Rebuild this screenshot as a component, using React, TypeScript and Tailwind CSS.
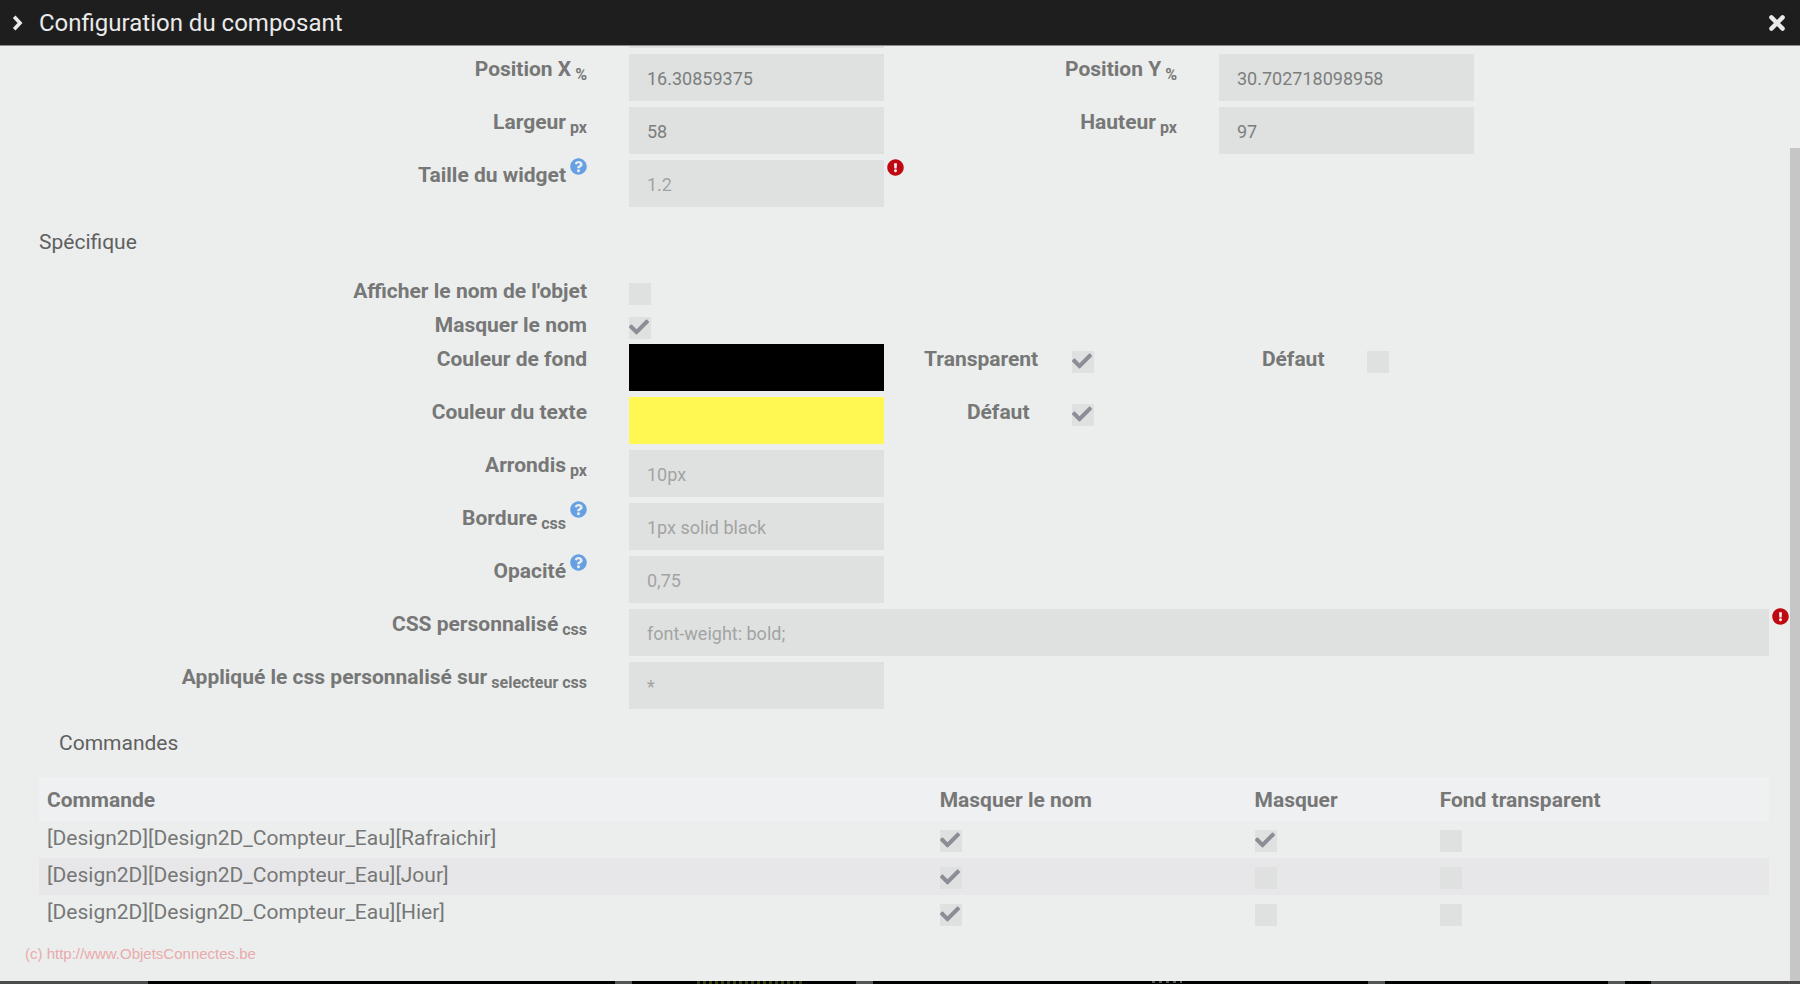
import type { ReactNode } from 'react';
import { FaCheck, FaExclamationCircle, FaQuestionCircle } from 'react-icons/fa';

const commands = [
    { name: '[Design2D][Design2D_Compteur_Eau][Rafraichir]', hideName: true, hide: true, transparent: false },
    { name: '[Design2D][Design2D_Compteur_Eau][Jour]', hideName: true, hide: false, transparent: false },
    { name: '[Design2D][Design2D_Compteur_Eau][Hier]', hideName: true, hide: false, transparent: false },
];

function Row({ children, tall = true }: { children: ReactNode; tall?: boolean }) {
    return <div className={tall ? 'grid grid-cols-12 h-[53px]' : 'grid grid-cols-12 h-[34px]'}>{children}</div>;
}

interface LabelProps {
    id: string;
    text: string;
    unit?: string;
    help?: boolean;
    className?: string;
}

function Label({ id, text, unit, help, className = 'col-span-4' }: LabelProps) {
    return (
        <div className={`${className} pl-5 pr-[22px] text-right font-bold leading-[30px] whitespace-nowrap`}>
            <label htmlFor={id}>
                {text}
                {unit && <sub className="text-base leading-none"> {unit}</sub>}
            </label>
            {help && <FaQuestionCircle className="inline ml-1 -mt-0.5 align-top text-[17px] text-[#66a0e4]" />}
        </div>
    );
}

interface FieldProps {
    id: string;
    value?: string;
    placeholder?: string;
    warning?: boolean;
    className?: string;
}

function Field({ id, value, placeholder, warning, className = 'col-span-2' }: FieldProps) {
    return (
        <div className={`${className} relative px-5`}>
            <input
                id={id}
                type="text"
                defaultValue={value}
                placeholder={placeholder}
                className="block w-full h-[47px] pt-px px-[18px] bg-[#dfe1e0] text-lg text-[#7c7e7d] placeholder:text-[#a2a4a3] outline-none"
            />
            {warning && <FaExclamationCircle className="absolute right-0 -top-px text-[17px] text-[#bf0811]" />}
        </div>
    );
}

function ColorField({ id, value }: { id: string; value: string }) {
    return (
        <div className="col-span-2 px-5">
            <input
                id={id}
                type="color"
                defaultValue={value}
                className="block w-full h-[47px] appearance-none [&::-webkit-color-swatch-wrapper]:p-0 [&::-webkit-color-swatch]:border-0"
            />
        </div>
    );
}

function Checkbox({ id, label, checked }: { id: string; label?: string; checked?: boolean }) {
    return (
        <span className="relative block w-[22px] h-[22px]">
            <input
                id={id}
                type="checkbox"
                aria-label={label}
                defaultChecked={checked}
                className="peer block w-full h-full appearance-none bg-[#dfe1e0]"
            />
            <FaCheck className="absolute left-0 top-0 hidden text-xl text-[#8c8d96] pointer-events-none peer-checked:block" />
        </span>
    );
}

function CheckboxCell({ id, checked }: { id: string; checked?: boolean }) {
    return (
        <div className="col-span-1 px-5 pt-[7px]">
            <Checkbox id={id} checked={checked} />
        </div>
    );
}

export default function App() {
    return (
        <div className="flex flex-col h-screen bg-black font-['Roboto',sans-serif] text-[21px] text-[#767776]">
            <header className="flex items-center shrink-0 h-[46px] pl-3 pr-[15px] border-b border-[#8c8d8c] bg-[#1e1e1e] text-[#eaeaea]">
                <svg className="w-3 h-4" viewBox="0 0 12 16" fill="none" stroke="currentColor" strokeWidth="3.6">
                    <path d="M2.2 1.8 8 8l-5.8 6.2" />
                </svg>
                <h1 className="ml-[15px] text-2xl">Configuration du composant</h1>
                <button type="button" aria-label="Fermer" className="ml-auto">
                    <svg
                        className="w-4 h-4"
                        viewBox="0 0 16 16"
                        fill="none"
                        stroke="currentColor"
                        strokeWidth="4.4"
                        strokeLinecap="round"
                    >
                        <path d="m2.4 2.4 11.2 11.2M13.6 2.4 2.4 13.6" />
                    </svg>
                </button>
            </header>

            <main className="relative flex-1 min-h-0 overflow-hidden bg-[#ebeeed]">
                <form className="pl-[19px] pr-[11px]">
                    {/* bottom edge of the field scrolled under the header */}
                    <div className="grid grid-cols-12 h-2">
                        <div className="col-span-2 col-start-5 mx-5 h-0.5 bg-[#dfe1e0]" />
                    </div>
                    <Row>
                        <Label id="posX" text="Position X" unit="%" />
                        <Field id="posX" value="16.30859375" />
                        <Label id="posY" text="Position Y" unit="%" className="col-span-2" />
                        <Field id="posY" value="30.702718098958" />
                    </Row>
                    <Row>
                        <Label id="width" text="Largeur" unit="px" />
                        <Field id="width" value="58" />
                        <Label id="height" text="Hauteur" unit="px" className="col-span-2" />
                        <Field id="height" value="97" />
                    </Row>
                    <Row>
                        <Label id="size" text="Taille du widget" help />
                        <Field id="size" placeholder="1.2" warning />
                    </Row>

                    <h2 className="px-5 pt-[15px] pb-5 leading-7 text-[#5f605f]">Spécifique</h2>

                    <Row tall={false}>
                        <Label id="showObject" text="Afficher le nom de l'objet" />
                        <CheckboxCell id="showObject" />
                    </Row>
                    <Row tall={false}>
                        <Label id="hideName" text="Masquer le nom" />
                        <CheckboxCell id="hideName" checked />
                    </Row>
                    <Row>
                        <Label id="background" text="Couleur de fond" />
                        <ColorField id="background" value="#000000" />
                        <Label id="bgTransparent" text="Transparent" className="col-span-1" />
                        <CheckboxCell id="bgTransparent" checked />
                        <Label id="bgDefault" text="Défaut" className="col-span-1" />
                        <CheckboxCell id="bgDefault" />
                    </Row>
                    <Row>
                        <Label id="color" text="Couleur du texte" />
                        <ColorField id="color" value="#fff853" />
                        <Label id="colorDefault" text="Défaut" className="col-span-1" />
                        <CheckboxCell id="colorDefault" checked />
                    </Row>
                    <Row>
                        <Label id="radius" text="Arrondis" unit="px" />
                        <Field id="radius" placeholder="10px" />
                    </Row>
                    <Row>
                        <Label id="border" text="Bordure" unit="css" help />
                        <Field id="border" placeholder="1px solid black" />
                    </Row>
                    <Row>
                        <Label id="opacity" text="Opacité" help />
                        <Field id="opacity" placeholder="0,75" />
                    </Row>
                    <Row>
                        <Label id="css" text="CSS personnalisé" unit="css" />
                        <Field id="css" placeholder="font-weight: bold;" warning className="col-span-8" />
                    </Row>
                    <Row>
                        <Label id="selector" text="Appliqué le css personnalisé sur" unit="selecteur css" />
                        <Field id="selector" placeholder="*" />
                    </Row>

                    <h2 className="px-10 pt-3.5 pb-5 leading-7 text-[#5f605f]">Commandes</h2>

                    <div className="px-5">
                        <table className="w-full table-fixed text-left leading-7">
                            <colgroup>
                                <col className="w-[51.6%]" />
                                <col className="w-[18.2%]" />
                                <col className="w-[10.7%]" />
                                <col />
                            </colgroup>
                            <thead>
                                <tr className="h-11 bg-[#eff0f2]">
                                    <th className="px-2 pt-0.5">Commande</th>
                                    <th className="px-2 pt-0.5">Masquer le nom</th>
                                    <th className="px-2 pt-0.5">Masquer</th>
                                    <th className="px-2 pt-0.5">Fond transparent</th>
                                </tr>
                            </thead>
                            <tbody>
                                {commands.map((cmd) => (
                                    <tr key={cmd.name} className="h-[37px] align-top even:bg-[#e7e7e9]">
                                        <td className="px-2 pt-[3px]">{cmd.name}</td>
                                        <td className="px-2 pt-[9px]">
                                            <Checkbox id={`${cmd.name}-name`} label="Masquer le nom" checked={cmd.hideName} />
                                        </td>
                                        <td className="px-2 pt-[9px]">
                                            <Checkbox id={`${cmd.name}-hide`} label="Masquer" checked={cmd.hide} />
                                        </td>
                                        <td className="px-2 pt-[9px]">
                                            <Checkbox
                                                id={`${cmd.name}-bg`}
                                                label="Fond transparent"
                                                checked={cmd.transparent}
                                            />
                                        </td>
                                    </tr>
                                ))}
                            </tbody>
                        </table>
                    </div>
                </form>

                {/* Watermark */}
                <p className="absolute left-[25px] bottom-4 whitespace-nowrap font-['Liberation_Sans',sans-serif] text-[15px] text-[#e9abab]">
                    (c) http://www.ObjetsConnectes.be
                </p>

                {/* Scrollbar thumb */}
                <div className="absolute right-0 top-[102px] bottom-0 w-2.5 bg-[#c6c6c6]" />
            </main>

            {/* Sliver of the design page showing below the dialog */}
            <svg className="block shrink-0 w-full h-[3px]" viewBox="0 0 1800 3" preserveAspectRatio="none">
                <path fill="#4a4b4a" d="M0 0h148v3H0zM1651 0h149v3h-149z" />
                <path fill="#555" d="M615 0h17v3h-17zM856 0h17v3h-17zM1368 0h17v3h-17zM1608 0h17v3h-17z" />
                <path stroke="#2f3f12" strokeWidth="3" strokeDasharray="3 3" d="M697 1.5h108" />
                <path stroke="#555" strokeWidth="2" strokeDasharray="3 4" d="M1152 1h30" />
            </svg>
        </div>
    );
}
